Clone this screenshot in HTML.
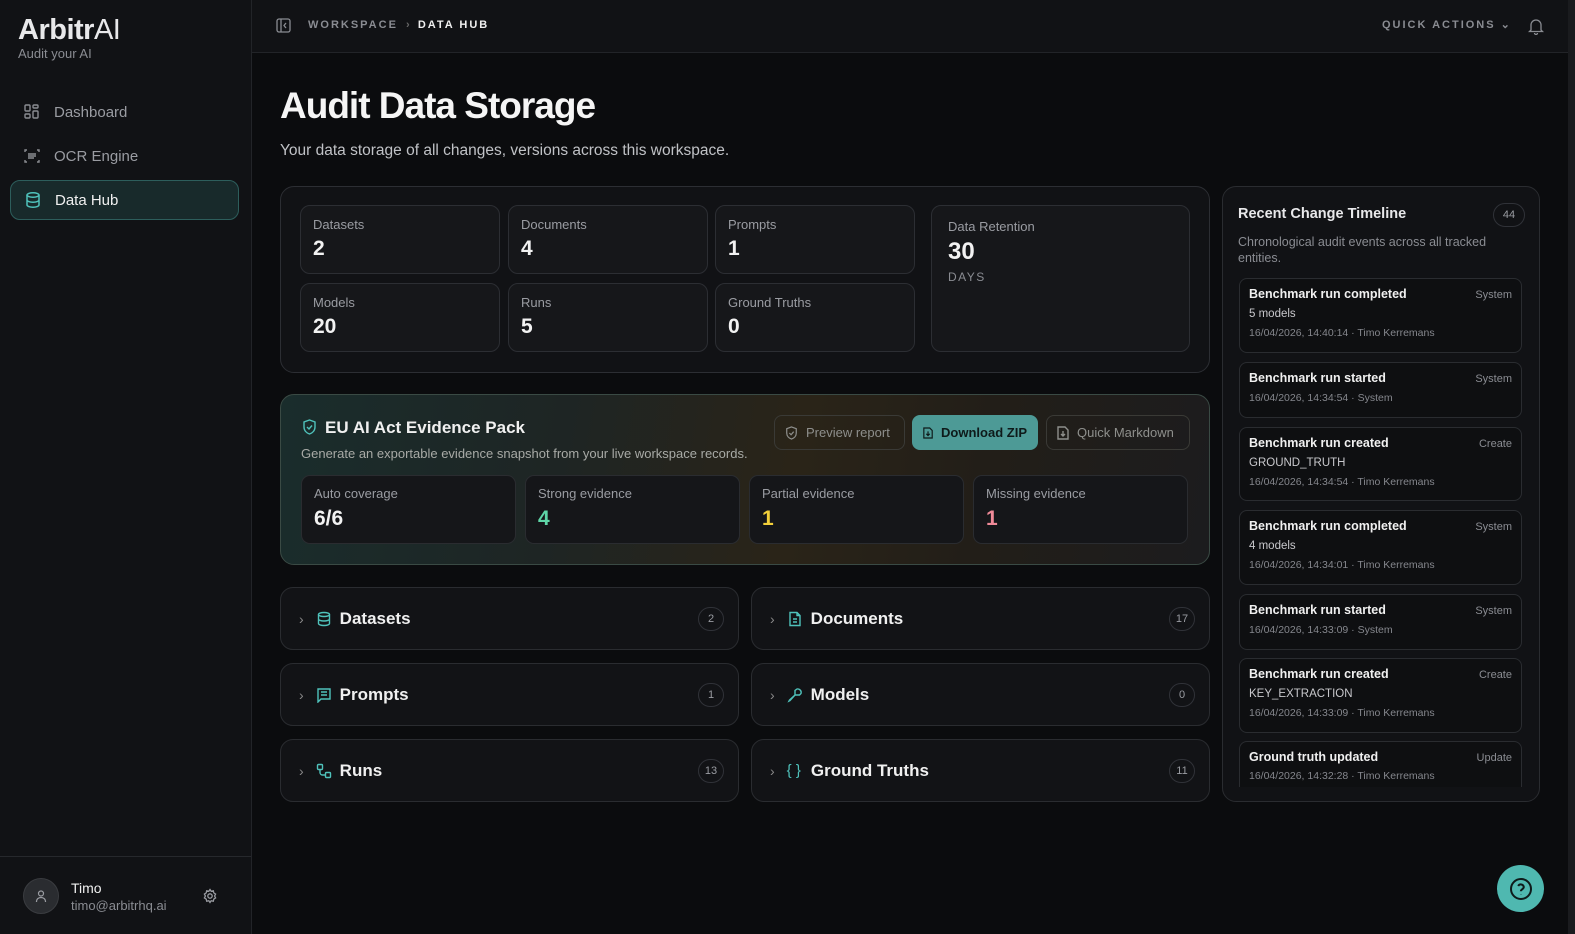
<!DOCTYPE html>
<html><head><meta charset="utf-8"><style>
*{box-sizing:border-box;margin:0;padding:0}
body{width:1575px;height:934px;background:#0b0c0e;font-family:"Liberation Sans",sans-serif;color:#e8e8ea;position:relative;overflow:hidden}
.a{position:absolute}
.sb{left:0;top:0;width:252px;height:934px;background:#111215;border-right:1px solid #222428}
.nav{left:10px;width:229px;height:40px;border-radius:10px;display:flex;align-items:center;padding-left:13px;gap:13px;font-size:15px;color:#9a9ca2}
.card{background:#16171a;border:1px solid #2c2e33;border-radius:10px}
.stat{position:absolute;width:200px;height:69px;padding:11px 12px}
.stat .l{font-size:13px;color:#9a9ca2}
.stat .v{font-size:21px;font-weight:bold;color:#f2f2f2;margin-top:5px}
.ev{position:absolute;top:80px;width:215px;height:69px;background:#151619;border:1px solid #2a2c30;border-radius:9px;padding:10px 12px}
.ev .l{font-size:13px;color:#9a9ca2}.ev .v{font-size:21px;font-weight:bold;margin-top:6px}
.sec{position:absolute;width:459px;height:63px;background:#121316;border:1px solid #2a2c30;border-radius:13px;display:flex;align-items:center;padding-left:18px;font-size:17px;font-weight:bold;color:#f0f0f0}
.sec .ch{color:#888;font-weight:normal;margin-right:12px;font-size:14px}
.sec svg{margin-right:8px}
.cnt{position:absolute;right:14px;top:19px;width:26px;height:24px;border:1px solid #303238;border-radius:12px;font-size:11px;color:#9a9ca2;font-weight:normal;display:flex;align-items:center;justify-content:center}
.tl{position:absolute;left:16px;width:283px;background:#0e0f11;border:1px solid #2a2c30;border-radius:8px;padding:8px 9px}
.tl .t{font-size:12.5px;font-weight:bold;color:#f0f0f0}
.tl .tag{position:absolute;right:9px;top:10px;font-size:11px;color:#8a8c92}
.tl .s{font-size:11.5px;color:#c8c8cc;margin-top:7px}
.tl .d{font-size:10.5px;color:#85878d;margin-top:7px}
.btn{position:absolute;top:20px;height:35px;border:1px solid #3a3a36;border-radius:8px;display:flex;align-items:center;gap:8px;padding:0 10px;font-size:13px;color:#8e8f8c;white-space:nowrap}
</style></head><body>
<div class="a sb">
 <div class="a" style="left:18px;top:14px;font-size:29px;letter-spacing:-0.5px"><b>Arbitr</b><span style="font-weight:300">AI</span></div>
 <div class="a" style="left:18px;top:46px;font-size:13px;color:#8a8c92">Audit your AI</div>
 <div class="a nav" style="top:92px"><svg width="18" height="18" viewBox="0 0 18 18" fill="none" stroke="#8a8c92" stroke-width="1.4"><rect x="2" y="2" width="5" height="6" rx="1"/><rect x="10" y="2" width="5" height="3" rx="1"/><rect x="10" y="8" width="5" height="7" rx="1"/><rect x="2" y="11" width="5" height="4" rx="1"/></svg>Dashboard</div>
 <div class="a nav" style="top:136px"><svg width="18" height="18" viewBox="0 0 18 18" fill="none" stroke="#8a8c92" stroke-width="1.4"><path d="M2 5V3h2M14 3h2v2M16 13v2h-2M4 15H2v-2M5 7h8M5 9h8M5 11h6"/></svg>OCR Engine</div>
 <div class="a nav" style="top:180px;background:#182a2b;border:1px solid #2d5e5c;color:#f0f0f0"><svg width="18" height="18" viewBox="0 0 18 18" fill="none" stroke="#4fc2bb" stroke-width="1.5"><ellipse cx="9" cy="4" rx="6" ry="2.2"/><path d="M3 4v10c0 1.2 2.7 2.2 6 2.2s6-1 6-2.2V4M3 9c0 1.2 2.7 2.2 6 2.2s6-1 6-2.2"/></svg>Data Hub</div>
 <div class="a" style="left:0;top:856px;width:251px;border-top:1px solid #26282c"></div>
 <div class="a" style="left:23px;top:878px;width:36px;height:36px;border-radius:50%;background:#2a2c30;border:1px solid #3a3c40;display:flex;align-items:center;justify-content:center"><svg width="14" height="14" viewBox="0 0 14 14" fill="none" stroke="#9a9ca2" stroke-width="1.2"><circle cx="7" cy="4.5" r="2.5"/><path d="M2.5 13c0-3 2-4.5 4.5-4.5s4.5 1.5 4.5 4.5"/></svg></div>
 <div class="a" style="left:71px;top:880px;font-size:14px;color:#f0f0f0">Timo</div>
 <div class="a" style="left:71px;top:898px;font-size:13px;color:#8a8c92">timo@arbitrhq.ai</div>
 <svg class="a" style="left:202px;top:888px" width="16" height="16" viewBox="0 0 16 16" fill="none" stroke="#9a9ca2" stroke-width="1.3"><circle cx="8" cy="8" r="2.2"/><path d="M8 1.5l1.2 1.8 2.1-.5.5 2.1 1.8 1.2-1 1.9 1 1.9-1.8 1.2-.5 2.1-2.1-.5L8 14.5l-1.2-1.8-2.1.5-.5-2.1-1.8-1.2 1-1.9-1-1.9 1.8-1.2.5-2.1 2.1.5z"/></svg>
</div>
<div class="a" style="left:252px;top:0;width:1316px;height:52px;background:#111215"></div>
<div class="a" style="left:252px;top:52px;width:1316px;border-top:1px solid #222428"></div>
<svg class="a" style="left:276px;top:18px" width="15" height="15" viewBox="0 0 15 15" fill="none" stroke="#8a8c92" stroke-width="1.3"><rect x="1" y="1" width="13" height="13" rx="2"/><path d="M5 1v13M10 5l-2 2.5 2 2.5"/></svg>
<div class="a" style="left:308px;top:19px;font-size:11px;letter-spacing:2px;color:#8a8c92;font-weight:bold">WORKSPACE <span style="color:#666;letter-spacing:0">&nbsp;›&nbsp;</span> <span style="color:#f0f0f0">DATA HUB</span></div>
<div class="a" style="left:1382px;top:18px;font-size:11px;letter-spacing:2px;color:#8a8c92;font-weight:bold">QUICK ACTIONS ⌄</div>
<svg class="a" style="left:1528px;top:17px" width="16" height="18" viewBox="0 0 16 18" fill="none" stroke="#8a8c92" stroke-width="1.3"><path d="M3 13V8a5 5 0 0110 0v5l1.5 1.5h-13zM6.5 16a1.5 1.5 0 003 0"/></svg>
<div class="a" style="left:1568px;top:0;width:7px;height:934px;background:#1a1b1e"></div>

<div class="a" style="left:280px;top:85px;font-size:37px;font-weight:bold;letter-spacing:-1px;color:#f5f5f5">Audit Data Storage</div>
<div class="a" style="left:280px;top:142px;font-size:15.5px;color:#c0c2c6">Your data storage of all changes, versions across this workspace.</div>

<div class="a card" style="left:280px;top:186px;width:930px;height:187px;background:#111215;border-radius:14px">
 <div class="stat card" style="left:19px;top:18px"><div class="l">Datasets</div><div class="v">2</div></div>
 <div class="stat card" style="left:227px;top:18px"><div class="l">Documents</div><div class="v">4</div></div>
 <div class="stat card" style="left:434px;top:18px"><div class="l">Prompts</div><div class="v">1</div></div>
 <div class="stat card" style="left:19px;top:96px"><div class="l">Models</div><div class="v">20</div></div>
 <div class="stat card" style="left:227px;top:96px"><div class="l">Runs</div><div class="v">5</div></div>
 <div class="stat card" style="left:434px;top:96px"><div class="l">Ground Truths</div><div class="v">0</div></div>
 <div class="stat card" style="left:650px;top:18px;width:259px;height:147px;padding:13px 16px"><div class="l">Data Retention</div><div class="v" style="font-size:24px;margin-top:4px">30</div><div style="font-size:12px;letter-spacing:1.5px;color:#8a8c92;margin-top:4px">DAYS</div></div>
</div>

<div class="a" style="left:280px;top:394px;width:930px;height:171px;border-radius:14px;border:1px solid #3a4a44;background:linear-gradient(100deg,#1a2d2c 0%,#1e2524 30%,#2a2418 55%,#221e18 75%,#1c1c1e 100%)">
 <svg class="a" style="left:21px;top:24px" width="15" height="16" viewBox="0 0 15 16" fill="none" stroke="#4fc2bb" stroke-width="1.4"><path d="M7.5 1L13 3v5c0 3.5-2.5 6-5.5 7C4.5 14 2 11.5 2 8V3z"/><path d="M5 8l2 2 3-3.5"/></svg>
 <div class="a" style="left:44px;top:23px;font-size:17px;font-weight:bold;color:#f0f0f0">EU AI Act Evidence Pack</div>
 <div class="a" style="left:20px;top:51px;font-size:13px;color:#a8aaa6">Generate an exportable evidence snapshot from your live workspace records.</div>
 <div class="btn" style="left:493px;width:131px"><svg width="13" height="14" viewBox="0 0 15 16" fill="none" stroke="#8e8f8c" stroke-width="1.4"><path d="M7.5 1L13 3v5c0 3.5-2.5 6-5.5 7C4.5 14 2 11.5 2 8V3z"/><path d="M5 8l2 2 3-3.5"/></svg>Preview report</div>
 <div class="btn" style="left:631px;width:126px;background:#4d9a96;border-color:#4d9a96;color:#0e1a1a;font-weight:bold"><svg width="12" height="14" viewBox="0 0 12 14" fill="none" stroke="#0e1a1a" stroke-width="1.4"><path d="M1 1h7l3 3v9H1zM6 5v5M4 8l2 2 2-2"/></svg>Download ZIP</div>
 <div class="btn" style="left:765px;width:144px"><svg width="12" height="14" viewBox="0 0 12 14" fill="none" stroke="#8e8f8c" stroke-width="1.4"><path d="M1 1h7l3 3v9H1zM6 5v5M4 8l2 2 2-2"/></svg>Quick Markdown</div>
 <div class="ev" style="left:20px"><div class="l">Auto coverage</div><div class="v" style="color:#f2f2f2">6/6</div></div>
 <div class="ev" style="left:244px"><div class="l">Strong evidence</div><div class="v" style="color:#5fd6a8">4</div></div>
 <div class="ev" style="left:468px"><div class="l">Partial evidence</div><div class="v" style="color:#f2cf3a">1</div></div>
 <div class="ev" style="left:692px"><div class="l">Missing evidence</div><div class="v" style="color:#f08a98">1</div></div>
</div>

<div class="sec" style="left:280px;top:587px"><span class="ch">›</span><svg width="16" height="16" viewBox="0 0 16 16" fill="none" stroke="#4fc2bb" stroke-width="1.4"><ellipse cx="8" cy="3.5" rx="5.5" ry="2"/><path d="M2.5 3.5v9c0 1.1 2.5 2 5.5 2s5.5-.9 5.5-2v-9M2.5 8c0 1.1 2.5 2 5.5 2s5.5-.9 5.5-2"/></svg>Datasets<div class="cnt">2</div></div>
<div class="sec" style="left:751px;top:587px"><span class="ch">›</span><svg width="16" height="16" viewBox="0 0 16 16" fill="none" stroke="#4fc2bb" stroke-width="1.4"><path d="M3 1.5h7l3 3v10H3zM10 1.5v3h3M6 8h4M6 11h4"/></svg>Documents<div class="cnt">17</div></div>
<div class="sec" style="left:280px;top:663px"><span class="ch">›</span><svg width="16" height="16" viewBox="0 0 16 16" fill="none" stroke="#4fc2bb" stroke-width="1.4"><path d="M2 2h12v10H5l-3 3zM5 5h6M5 8h6"/></svg>Prompts<div class="cnt">1</div></div>
<div class="sec" style="left:751px;top:663px"><span class="ch">›</span><svg width="16" height="16" viewBox="0 0 16 16" fill="none" stroke="#4fc2bb" stroke-width="1.4"><path d="M10 2a3.5 3.5 0 014 4.5l-1.5 1.5L8 8 3 13.5 2 14l.5-1L8 8l0-4.5z"/></svg>Models<div class="cnt">0</div></div>
<div class="sec" style="left:280px;top:739px"><span class="ch">›</span><svg width="16" height="16" viewBox="0 0 16 16" fill="none" stroke="#4fc2bb" stroke-width="1.4"><rect x="1.5" y="1.5" width="5" height="5" rx="1"/><rect x="9.5" y="9.5" width="5" height="5" rx="1"/><path d="M4 6.5v3a2.5 2.5 0 002.5 2.5h3"/></svg>Runs<div class="cnt">13</div></div>
<div class="sec" style="left:751px;top:739px"><span class="ch">›</span><span style="color:#4fc2bb;font-weight:normal;margin-right:10px;font-size:15px">{ }</span>Ground Truths<div class="cnt">11</div></div>

<div class="a" style="left:1222px;top:186px;width:318px;height:616px;border:1px solid #2a2c30;border-radius:14px;background:#111215;overflow:hidden">
 <div class="a" style="left:15px;top:19px;font-size:14.5px;font-weight:bold">Recent Change Timeline</div>
 <div class="a" style="left:270px;top:16px;width:32px;height:24px;border:1px solid #303238;border-radius:12px;font-size:11px;color:#9a9ca2;display:flex;align-items:center;justify-content:center">44</div>
 <div class="a" style="left:15px;top:47px;font-size:12.5px;color:#8a8c92;width:290px;line-height:16px">Chronological audit events across all tracked entities.</div>
 <div class="a" style="left:0;top:0;width:318px;height:600px;overflow:hidden">
 <div class="tl" style="top:91px;height:75px"><div class="t">Benchmark run completed</div><div class="tag">System</div><div class="s">5 models</div><div class="d">16/04/2026, 14:40:14 · Timo Kerremans</div></div>
 <div class="tl" style="top:175px;height:56px"><div class="t">Benchmark run started</div><div class="tag">System</div><div class="d">16/04/2026, 14:34:54 · System</div></div>
 <div class="tl" style="top:240px;height:74px"><div class="t">Benchmark run created</div><div class="tag">Create</div><div class="s">GROUND_TRUTH</div><div class="d">16/04/2026, 14:34:54 · Timo Kerremans</div></div>
 <div class="tl" style="top:323px;height:75px"><div class="t">Benchmark run completed</div><div class="tag">System</div><div class="s">4 models</div><div class="d">16/04/2026, 14:34:01 · Timo Kerremans</div></div>
 <div class="tl" style="top:407px;height:56px"><div class="t">Benchmark run started</div><div class="tag">System</div><div class="d">16/04/2026, 14:33:09 · System</div></div>
 <div class="tl" style="top:471px;height:75px"><div class="t">Benchmark run created</div><div class="tag">Create</div><div class="s">KEY_EXTRACTION</div><div class="d">16/04/2026, 14:33:09 · Timo Kerremans</div></div>
 <div class="tl" style="top:554px;height:75px"><div class="t">Ground truth updated</div><div class="tag">Update</div><div class="d" style="margin-top:6px">16/04/2026, 14:32:28 · Timo Kerremans</div></div>
 </div>
</div>

<div class="a" style="left:1497px;top:865px;width:47px;height:47px;border-radius:50%;background:#4fb8b0;display:flex;align-items:center;justify-content:center"><svg width="24" height="24" viewBox="0 0 24 24" fill="none" stroke="#0e1a1a" stroke-width="2"><circle cx="12" cy="12" r="10"/><path d="M9.2 9a3 3 0 015.6 1c0 2-3 2.5-3 4.2M12 17.5v.3"/></svg></div>
</body></html>
